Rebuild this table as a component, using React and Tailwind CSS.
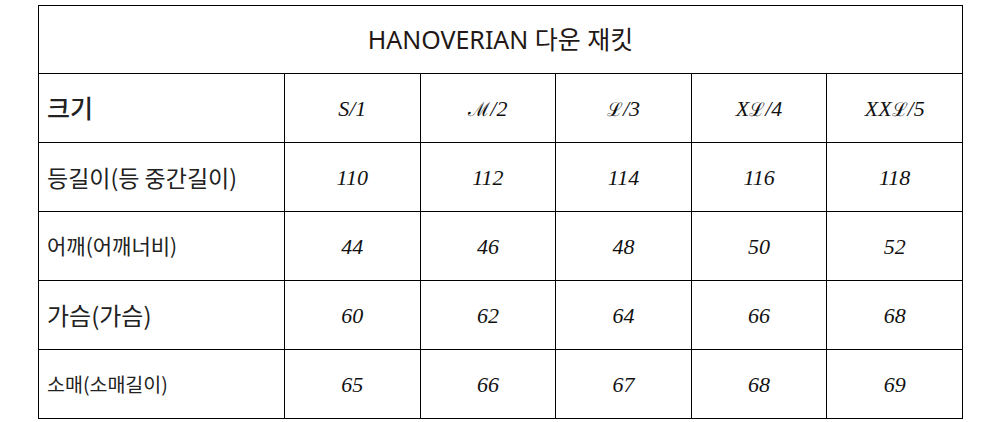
import React from "react";

const sizes = ["S/1", "ℳ/2", "ℒ/3", "Xℒ/4", "XXℒ/5"];

const rows = [
  { label: "등길이(등 중간길이)", cls: "text-[23px]", values: ["110", "112", "114", "116", "118"] },
  { label: "어깨(어깨너비)", cls: "text-[21px]", values: ["44", "46", "48", "50", "52"] },
  { label: "가슴(가슴)", cls: "text-[24px]", values: ["60", "62", "64", "66", "68"] },
  { label: "소매(소매길이)", cls: "text-[19.5px]", values: ["65", "66", "67", "68", "69"] },
];

// script letters (ℳ, ℒ) come from DejaVu, the rest from Liberation Serif
function SizeText({ text }) {
  return (
    <>
      {[...text].map((ch, i) =>
        ch === "ℳ" || ch === "ℒ" ? (
          <span key={i} className="font-['DejaVu_Serif',serif] not-italic text-[19px]">
            {ch}
          </span>
        ) : (
          <span key={i}>{ch}</span>
        )
      )}
    </>
  );
}

export default function App() {
  return (
    <div className="w-[1000px] h-[422px] bg-white pt-[5px] pl-[38px]">
      <table className="w-[925px] border-collapse table-fixed">
        <colgroup>
          <col className="w-[246px]" />
          <col />
          <col />
          <col />
          <col />
          <col />
        </colgroup>
        <tbody>
          {/* TITLE */}
          <tr className="h-[68px]">
            <td
              colSpan={6}
              className="border-[1.5px] border-black text-center text-[25px] text-[#231815] font-['Noto_Sans','Noto_Sans_CJK_KR',sans-serif]"
            >
              HANOVERIAN 다운 재킷
            </td>
          </tr>

          {/* SIZE */}
          <tr className="h-[69px]">
            <td className="border-[1.5px] border-black pl-[8px] text-[25px] font-medium text-[#222] font-['Noto_Sans_CJK_KR',sans-serif]">
              크기
            </td>
            {sizes.map((s) => (
              <td
                key={s}
                className="border-[1.5px] border-black text-center text-[22px] italic text-[#111] font-['Liberation_Serif',serif]"
              >
                <SizeText text={s} />
              </td>
            ))}
          </tr>

          {/* MEASUREMENTS */}
          {rows.map((r) => (
            <tr key={r.label} className="h-[69px]">
              <td
                className={`border-[1.5px] border-black pl-[8px] text-[#222] font-['Noto_Sans_CJK_KR',sans-serif] ${r.cls}`}
              >
                {r.label}
              </td>
              {r.values.map((v, i) => (
                <td
                  key={i}
                  className="border-[1.5px] border-black text-center text-[22px] italic text-[#111] font-['Liberation_Serif',serif]"
                >
                  {v}
                </td>
              ))}
            </tr>
          ))}
        </tbody>
      </table>
    </div>
  );
}
